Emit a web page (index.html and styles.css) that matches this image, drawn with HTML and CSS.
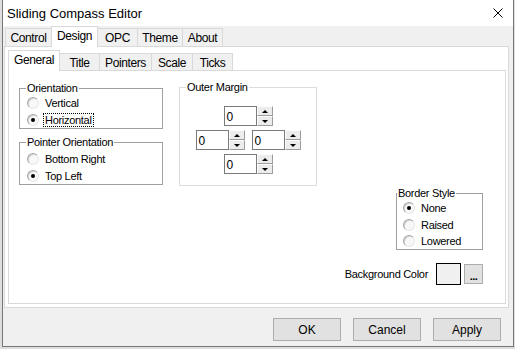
FILE: index.html
```html
<!DOCTYPE html>
<html lang="en">
<head>
    <meta charset="UTF-8">
    <title>Sliding Compass Editor</title>
    <link rel="stylesheet" href="styles.css">
</head>
<body>
    <div class="window">
        <div class="titlebar">
            <span class="title">Sliding Compass Editor</span>
            <svg class="close" width="10" height="10" viewBox="0 0 10 10">
                <path d="M0.5 0.5 L9.5 9.5 M9.5 0.5 L0.5 9.5" stroke="#000" stroke-width="1" fill="none"/>
            </svg>
        </div>

        <div class="tabs outer-tabs">
            <div class="tab" style="width:47px">Control</div>
            <div class="tab active" style="width:47px">Design</div>
            <div class="tab" style="width:41px">OPC</div>
            <div class="tab" style="width:46px">Theme</div>
            <div class="tab" style="width:41px">About</div>
        </div>

        <div class="outer-panel">
            <div class="tabs inner-tabs">
                <div class="tab active" style="width:52px">General</div>
                <div class="tab" style="width:41px">Title</div>
                <div class="tab" style="width:53px">Pointers</div>
                <div class="tab" style="width:42px">Scale</div>
                <div class="tab" style="width:41px">Ticks</div>
            </div>

            <div class="inner-panel">
                <div class="col-left">
                    <fieldset class="group">
                        <legend>Orientation</legend>
                        <div class="radio"><span class="dot"></span><span>Vertical</span></div>
                        <div class="radio"><span class="dot checked"></span><span class="focus">Horizontal</span></div>
                    </fieldset>
                    <fieldset class="group pointer-group">
                        <legend>Pointer Orientation</legend>
                        <div class="radio"><span class="dot"></span><span>Bottom Right</span></div>
                        <div class="radio"><span class="dot checked"></span><span>Top Left</span></div>
                    </fieldset>
                </div>

                <fieldset class="group margin-group">
                    <legend>Outer Margin</legend>
                    <div class="spin-wrap">
                        <div class="spinner">
                            <div class="edit">0</div>
                            <div class="spin-btns"><span class="spin up"></span><span class="spin down"></span></div>
                        </div>
                        <div class="spin-row">
                            <div class="spinner">
                                <div class="edit">0</div>
                                <div class="spin-btns"><span class="spin up"></span><span class="spin down"></span></div>
                            </div>
                            <div class="spinner">
                                <div class="edit">0</div>
                                <div class="spin-btns"><span class="spin up"></span><span class="spin down"></span></div>
                            </div>
                        </div>
                        <div class="spinner">
                            <div class="edit">0</div>
                            <div class="spin-btns"><span class="spin up"></span><span class="spin down"></span></div>
                        </div>
                    </div>
                </fieldset>

                <div class="col-right">
                    <fieldset class="group border-group">
                        <legend>Border Style</legend>
                        <div class="radio"><span class="dot checked"></span><span>None</span></div>
                        <div class="radio"><span class="dot"></span><span>Raised</span></div>
                        <div class="radio"><span class="dot"></span><span>Lowered</span></div>
                    </fieldset>
                    <div class="bg-row">
                        <span>Background Color</span>
                        <div class="color-box"></div>
                        <div class="dots-btn">...</div>
                    </div>
                </div>
            </div>
        </div>

        <div class="buttons">
            <button>OK</button>
            <button>Cancel</button>
            <button>Apply</button>
        </div>
    </div>
</body>
</html>
```

FILE: styles.css
```css
* {
    box-sizing: border-box;
}
body {
    margin: 0;
    padding: 0 1px 2px 2px;
    background: #dedede;
    font-family: "Liberation Sans", Arial, sans-serif;
    color: #000;
}
.window {
    width: 512px;
    height: 347px;
    border: 1px solid #777;
    border-top: none;
    background: #f0f0f0;
}
.titlebar {
    height: 26px;
    background: #fff;
    display: flex;
    align-items: center;
    justify-content: space-between;
    padding: 0 10px 0 4px;
}
.title {
    font-size: 13px;
}
.tabs {
    display: flex;
    align-items: flex-end;
}
.outer-tabs {
    height: 20px;
    padding-left: 2px;
}
.tab {
    height: 18px;
    border: 1px solid #d9d9d9;
    border-bottom: none;
    margin-right: -1px;
    background: #f0f0f0;
    font-size: 12px;
    letter-spacing: -0.4px;
    display: flex;
    align-items: center;
    justify-content: center;
    padding-top: 1px;
}
.tab.active {
    height: 21px;
    margin-bottom: -1px;
    background: #fff;
    position: relative;
    z-index: 1;
    padding-top: 0;
    padding-bottom: 2px;
}
.outer-panel {
    margin: 0 4px 0 1px;
    height: 262px;
    border: 1px solid #d9d9d9;
    background: #fff;
}
.inner-tabs {
    height: 23px;
    padding: 3px 0 0 3px;
}
.inner-tabs .tab {
    height: 17px;
}
.inner-tabs .tab.active {
    height: 21px;
}
.inner-panel {
    margin: 0 2px 0 3px;
    height: 234px;
    border: 1px solid #d9d9d9;
    background: #fff;
    display: flex;
    align-items: flex-start;
    padding: 11px 22px 0 10px;
    font-size: 11px;
    letter-spacing: -0.3px;
}
.col-left {
    width: 144px;
    display: flex;
    flex-direction: column;
}
.group {
    margin: 0;
    padding: 0 4px 0 7px;
    border: 1px solid #a0a0a0;
    min-width: 0;
}
.group legend {
    padding: 0 1px;
    margin-left: -1px;
    font-size: 11px;
    line-height: 12px;
}
.pointer-group {
    margin-top: 7px;
    padding-top: 2px;
}
.radio {
    display: flex;
    align-items: center;
    height: 17px;
    gap: 6px;
}
.dot {
    width: 12px;
    height: 12px;
    border-radius: 50%;
    border: 1px solid;
    border-color: #a8a8a8 #e6e6e6 #e6e6e6 #a8a8a8;
    background: #f8f8f8;
    box-shadow: inset 1px 1px 0 #d0d0d0;
    display: flex;
    align-items: center;
    justify-content: center;
    flex-shrink: 0;
}
.dot.checked::after {
    content: "";
    width: 4px;
    height: 4px;
    border-radius: 50%;
    background: #000;
}
.focus {
    outline: 1px dotted #000;
    padding: 0 1px;
    margin-left: -1px;
}
.margin-group {
    width: 138px;
    margin-left: 16px;
    margin-top: -1px;
    padding: 13px 0 11px 0;
    border-color: #dcdcdc;
}
.margin-group legend {
    margin-left: 6px;
}
.spin-wrap {
    display: flex;
    flex-direction: column;
    align-items: center;
    gap: 4px;
}
.spin-row {
    display: flex;
    gap: 7px;
}
.spinner {
    display: flex;
    height: 20px;
}
.edit {
    width: 33px;
    height: 20px;
    border: 1px solid #7a7a7a;
    font-size: 12px;
    letter-spacing: 0;
    padding: 3px 0 0 2px;
    background: #fff;
}
.spin-btns {
    width: 16px;
    display: flex;
    flex-direction: column;
}
.spin {
    height: 10px;
    background: #ececec;
    border: 1px solid;
    border-color: #fdfdfd #9d9d9d #9d9d9d #fdfdfd;
    display: flex;
    align-items: center;
    justify-content: center;
}
.spin.up::after {
    content: "";
    border-left: 3px solid transparent;
    border-right: 3px solid transparent;
    border-bottom: 3px solid #000;
}
.spin.down::after {
    content: "";
    border-left: 3px solid transparent;
    border-right: 3px solid transparent;
    border-top: 3px solid #000;
}
.col-right {
    flex: 1;
    display: flex;
    flex-direction: column;
    align-items: flex-end;
    padding-top: 105px;
}
.border-group {
    width: 87px;
    padding: 0;
}
.border-group legend {
    margin-left: 0;
}
.border-group .radio {
    margin-left: 6px;
}
.border-group .radio:last-child {
    height: 16px;
}
.bg-row {
    margin-top: 13px;
    display: flex;
    align-items: center;
}
.color-box {
    width: 25px;
    height: 22px;
    border: 1px solid #000;
    background: #f0f0f0;
    margin-left: 8px;
}
.dots-btn {
    width: 19px;
    height: 20px;
    margin-left: 3px;
    background: #e1e1e1;
    border: 1px solid #adadad;
    font-size: 11px;
    font-weight: bold;
    letter-spacing: -0.5px;
    display: flex;
    justify-content: center;
    align-items: flex-end;
    padding-bottom: 3px;
    line-height: 8px;
}
.buttons {
    display: flex;
    justify-content: flex-end;
    gap: 12px;
    padding: 10px 12px 0 0;
}
button {
    width: 68px;
    height: 23px;
    background: #e1e1e1;
    border: 1px solid #adadad;
    font-family: "Liberation Sans", Arial, sans-serif;
    font-size: 12px;
    color: #000;
    padding: 0;
}
```
